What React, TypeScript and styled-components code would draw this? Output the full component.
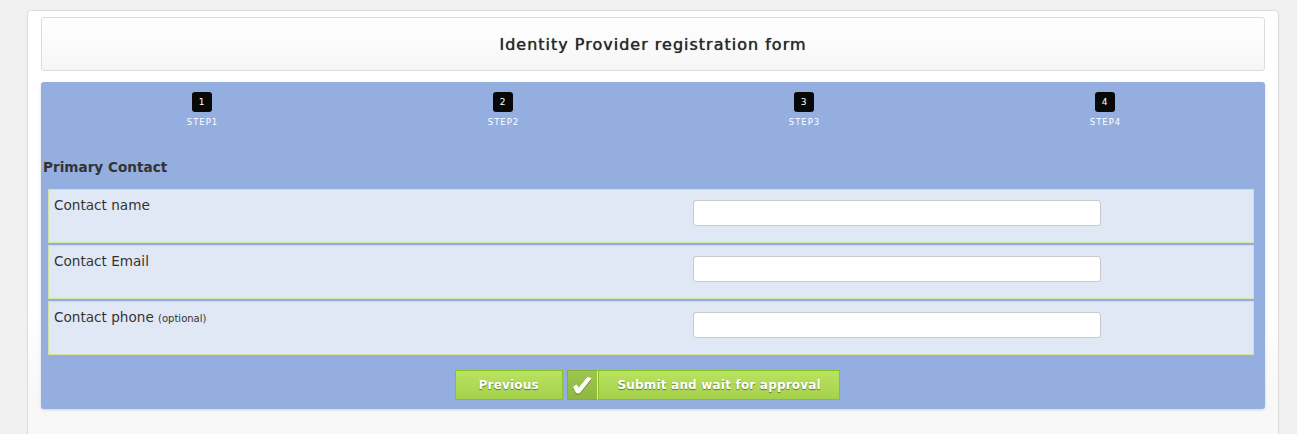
import React from "react";
import styled, { createGlobalStyle } from "styled-components";

const Global = createGlobalStyle`
  html, body { margin: 0; padding: 0; background: #f0f0f0; }
  body { font-family: "DejaVu Sans", Verdana, sans-serif; color: #333; }
`;

const Page = styled.div`
  padding: 10px 18px 0 27px;
  height: 434px;
  box-sizing: border-box;
  overflow: hidden;
`;

const Container = styled.div`
  border: 1px solid #dcdcdc;
  border-radius: 4px;
  background: linear-gradient(#ffffff 0px, #ffffff 300px, #f8f8f8 380px);
  padding: 6px 13px 40px 13px;
  min-height: 460px;
  box-sizing: border-box;
`;

const Header = styled.div`
  height: 54px;
  border: 1px solid #dcdcdc;
  border-radius: 3px;
  background: linear-gradient(#ffffff, #f6f6f6);
  display: flex;
  align-items: center;
  justify-content: center;
  box-sizing: border-box;
`;

const Title = styled.h1`
  margin: 0;
  font-size: 16px;
  font-weight: normal;
  letter-spacing: 1px;
  color: #2a2a2a;
  text-shadow: 0 0 0.8px #2a2a2a;
`;

const Panel = styled.div`
  margin-top: 11px;
  background: #94aedf;
  border-radius: 3px;
  box-shadow: 0 1px 3px rgba(0, 0, 0, 0.15);
  padding: 10px 6px 9px 2px;
`;

const Steps = styled.div`
  display: grid;
  grid-template-columns: repeat(4, 1fr);
  margin: 0 4px 0 8px;
`;

const Step = styled.div`
  display: flex;
  flex-direction: column;
  align-items: center;
`;

const Badge = styled.div`
  width: 20px;
  height: 20px;
  border-radius: 3px;
  background: #080808;
  color: #fff;
  font-size: 9px;
  display: flex;
  align-items: center;
  justify-content: center;
`;

const StepLabel = styled.div`
  margin-top: 5px;
  font-size: 8.5px;
  letter-spacing: 1px;
  color: #fff;
  display: flex;
  gap: 1px;
  padding-left: 2px;
`;

const Section = styled.h2`
  margin: 32px 0 14px 0;
  font-size: 13.6px;
  font-weight: bold;
  color: #333;
`;

const Rows = styled.div`
  display: flex;
  flex-direction: column;
  gap: 2px;
  margin: 0 5px 0 5px;
`;

const Row = styled.div`
  display: grid;
  grid-template-columns: 644px 408px;
  height: 54px;
  box-sizing: border-box;
  background: #e1e8f5;
  border: 1px solid #d3e3a2;
`;

const Label = styled.label`
  padding: 7px 0 0 5px;
  font-size: 13.6px;
  color: #333;
`;

const Small = styled.span`
  font-size: 10px;
`;

const Input = styled.input`
  margin-top: 10px;
  height: 26px;
  box-sizing: border-box;
  border: 1px solid #c8c8c8;
  border-radius: 3px;
  background: #fff;
`;

const Buttons = styled.div`
  display: flex;
  justify-content: center;
  gap: 4px;
  margin-top: 15px;
  padding-right: 7px;
`;

const Button = styled.button<{ $wide?: boolean }>`
  height: 30px;
  box-sizing: border-box;
  padding: 0 ${(p) => (p.$wide ? "18.5px" : "23px")};
  border: 1px solid #86c223;
  background: linear-gradient(#bae35e, #a4d14c);
  color: #fff;
  font-family: "DejaVu Sans", Verdana, sans-serif;
  font-weight: bold;
  font-size: 12px;
  letter-spacing: 0.2px;
  text-shadow: 0 1px 1px rgba(0, 0, 0, 0.45);
  display: flex;
  align-items: center;
  justify-content: center;
  cursor: pointer;
`;

const SubmitGroup = styled.div`
  display: flex;
`;

const Check = styled.span`
  width: 31px;
  height: 30px;
  box-sizing: border-box;
  background: linear-gradient(#9cc64e, #8fb842);
  border: 1px solid #86b12f;
  border-right: 1px solid #dbeeb4;
  display: flex;
  align-items: center;
  justify-content: center;
  svg {
    filter: drop-shadow(0 1px 0.5px rgba(0, 0, 0, 0.35));
  }
`;

const steps = [1, 2, 3, 4];

export default function App() {
  return (
    <>
      <Global />
      <Page>
        <Container>
          <Header>
            <Title>Identity Provider registration form</Title>
          </Header>
          <Panel>
            <Steps>
              {steps.map((n) => (
                <Step key={n}>
                  <Badge>{n}</Badge>
                  <StepLabel>STEP{n}</StepLabel>
                </Step>
              ))}
            </Steps>
            <Section>Primary Contact</Section>
            <Rows>
              <Row>
                <Label>Contact name</Label>
                <Input type="text" />
              </Row>
              <Row>
                <Label>Contact Email</Label>
                <Input type="text" />
              </Row>
              <Row>
                <Label>
                  Contact phone <Small>(optional)</Small>
                </Label>
                <Input type="text" />
              </Row>
            </Rows>
            <Buttons>
              <Button>Previous</Button>
              <SubmitGroup>
                <Check>
                  <svg width="20" height="20" viewBox="0 0 20 20">
                    <path
                      d="M1.5 12 L4.5 10 L6.5 13.5 L15.5 2.5 L19 3.5 L7.5 18 L4.5 18 Z"
                      fill="#fff"
                      stroke="#fff"
                      strokeWidth="1"
                      strokeLinejoin="round"
                    />
                  </svg>
                </Check>
                <Button $wide>Submit and wait for approval</Button>
              </SubmitGroup>
            </Buttons>
          </Panel>
        </Container>
      </Page>
    </>
  );
}
